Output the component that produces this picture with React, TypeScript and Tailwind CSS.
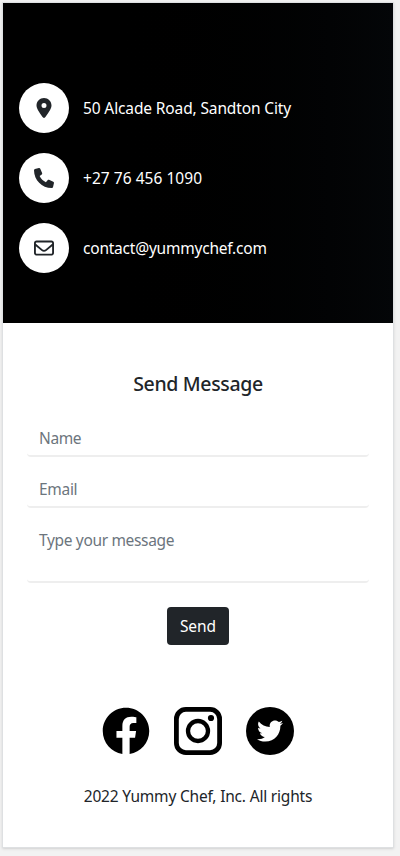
import React from "react";
import { FaLocationDot, FaRegEnvelope } from "react-icons/fa6";
import { FaFacebook, FaTwitter } from "react-icons/fa";

function Contact({ icon, children }: { icon: React.ReactNode; children: React.ReactNode }) {
  return (
    <li className="flex h-[50px] items-center gap-[14px]">
      <span className="flex size-[50px] shrink-0 items-center justify-center rounded-full bg-white text-[20px] text-[#212529]">
        {icon}
      </span>
      {children}
    </li>
  );
}

function PhoneIcon() {
  return (
    <svg className="size-5" viewBox="0 0 512 512" fill="currentColor">
      <path d="M511.2 387l-23.25 100.8c-3.266 14.25-15.79 24.22-30.46 24.22C205.2 512 0 306.8 0 54.5c0-14.66 9.969-27.2 24.22-30.45l100.8-23.25C139.7-2.602 154.7 5.018 160.8 18.92l46.52 108.5c5.438 12.78 1.77 27.67-8.98 36.45L144.5 207.1c33.98 69.22 90.26 125.5 159.5 159.5l44.08-53.8c8.688-10.78 23.69-14.51 36.47-8.975l108.5 46.51C506.1 357.2 514.6 372.4 511.2 387z" />
    </svg>
  );
}

function InstagramIcon() {
  return (
    <svg className="size-12" viewBox="0 0 48 48" fill="none" stroke="black">
      <rect x="2.4" y="2.4" width="43.2" height="43.2" rx="9.5" strokeWidth="4.8" />
      <circle cx="24" cy="24" r="10" strokeWidth="4.3" />
      <circle cx="37" cy="11" r="3.1" fill="black" stroke="none" />
    </svg>
  );
}

const field =
  "block w-full resize-none rounded-[4px] border-b-2 border-[#eeeeee] bg-white px-3 text-[15.5px] leading-6 outline-none placeholder:text-[#6c757d]";

export default function App() {
  return (
    <div className="h-[856px] w-[400px] overflow-hidden bg-[#f2f2f2] pl-[2px] pt-[2px] font-['Noto_Sans',sans-serif] text-[15.5px] leading-6 text-[#212529]">
      <div className="h-[846px] w-[392px] border border-[#dee0e2] bg-white shadow-sm">
        <section className="h-[320px] bg-linear-to-r from-black from-20% to-[#040608] px-4 pt-20 text-white">
          <ul className="flex flex-col gap-5">
            <Contact icon={<FaLocationDot />}>
              <span className="whitespace-nowrap tracking-[-0.13px]">50 Alcade Road, Sandton City</span>
            </Contact>
            <Contact icon={<PhoneIcon />}>
              <span className="whitespace-nowrap tracking-[0.04px]">+27 76 456 1090</span>
            </Contact>
            <Contact icon={<FaRegEnvelope />}>
              <span className="whitespace-nowrap tracking-[-0.22px]">contact@yummychef.com</span>
            </Contact>
          </ul>
        </section>
        <section className="px-6 pt-[49px]">
          <h5 className="text-center text-[19.5px] font-medium leading-6 tracking-[-0.35px]">Send Message</h5>
          <form className="mt-[22px]" onSubmit={(e) => e.preventDefault()}>
            <input className={`${field} h-[39px] pt-[2px] tracking-[-0.4px]`} placeholder="Name" />
            <input className={`${field} mt-3 h-[39px] pt-[2px] tracking-[-0.3px]`} placeholder="Email" />
            <textarea className={`${field} mt-3 h-[63px] pt-2 tracking-[-0.34px]`} placeholder="Type your message" />
            <button className="mx-auto mt-6 block h-[38px] w-[62px] rounded-[4px] bg-[#212529] tracking-[-0.05px] text-white">
              Send
            </button>
          </form>
        </section>
        <footer className="pt-[62px]">
          <div className="flex items-center justify-center gap-6">
            <FaFacebook className="size-12 text-black" />
            <InstagramIcon />
            <span className="flex size-12 items-center justify-center rounded-full bg-black">
              <FaTwitter className="text-[26px] text-white" />
            </span>
          </div>
          <p className="mt-[29px] whitespace-nowrap text-center tracking-[-0.19px]">2022 Yummy Chef, Inc. All rights</p>
        </footer>
      </div>
    </div>
  );
}
